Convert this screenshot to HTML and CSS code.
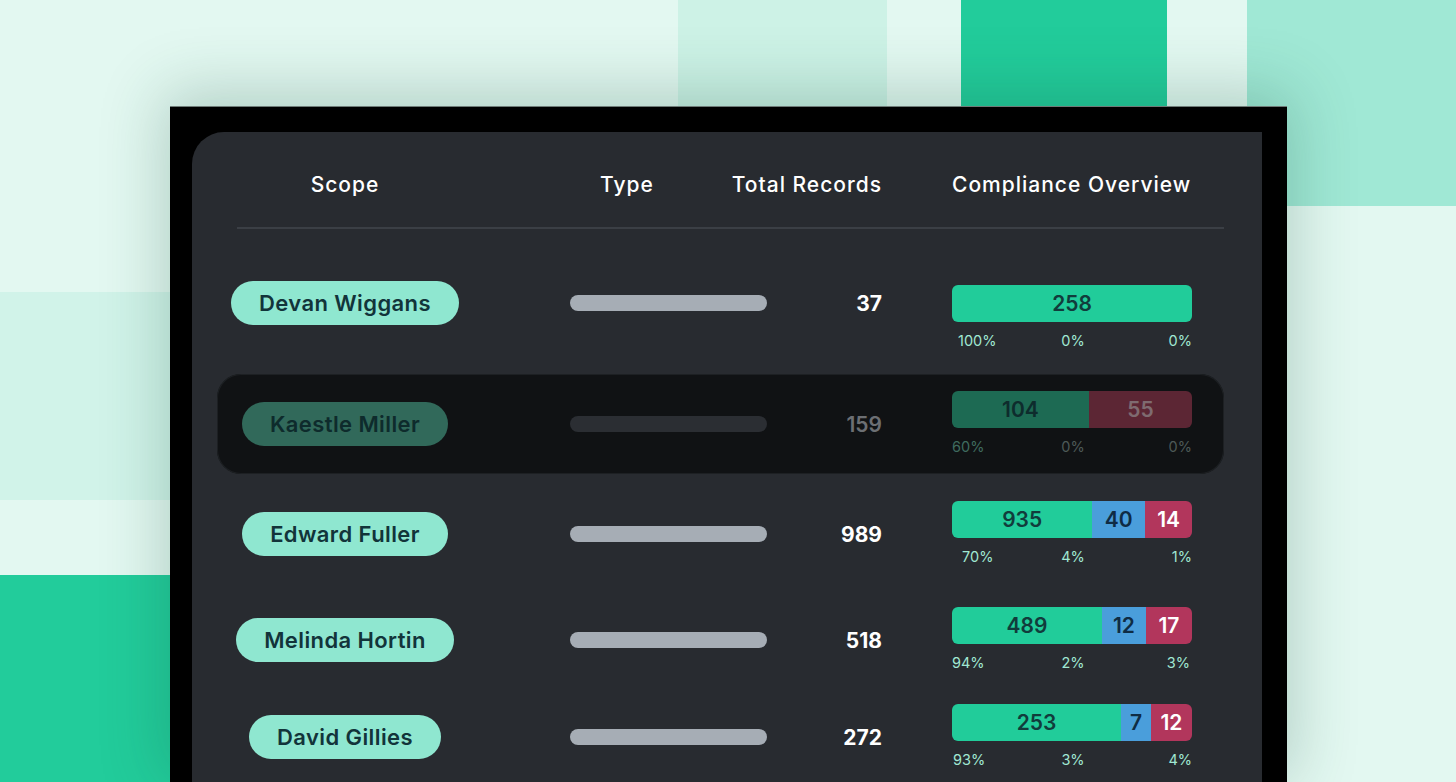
FILE: index.html
```html
<!DOCTYPE html>
<html lang="en">
    <head>
        <meta charset="utf-8">
        <title>Compliance Overview</title>
        <link rel="stylesheet" href="styles.css">
    </head>
    <body>
        <div class="frame">
            <div class="panel">
                <div class="table-head">
                    <div class="head-scope">Scope</div>
                    <div class="head-type">Type</div>
                    <div class="head-total"><span>Total Records</span></div>
                    <div class="head-compliance">Compliance Overview</div>
                </div>
                <div class="divider"></div>

                <div class="rows">
                    <div class="row row-first">
                        <div class="cell-scope"><span class="pill">Devan Wiggans</span></div>
                        <div class="cell-type"><div class="type-bar"></div></div>
                        <div class="cell-total">37</div>
                        <div class="cell-compliance">
                            <div class="stack">
                                <div class="seg seg-ok" style="width: 100%">258</div>
                            </div>
                            <div class="percents pad-6">
                                <span>100%</span><span>0%</span><span>0%</span>
                            </div>
                        </div>
                    </div>

                    <div class="row row-active">
                        <div class="cell-scope"><span class="pill">Kaestle Miller</span></div>
                        <div class="cell-type"><div class="type-bar"></div></div>
                        <div class="cell-total">159</div>
                        <div class="cell-compliance">
                            <div class="stack">
                                <div class="seg seg-ok" style="width: 57%">104</div>
                                <div class="seg seg-fail" style="width: 43%">55</div>
                            </div>
                            <div class="percents">
                                <span>60%</span><span>0%</span><span>0%</span>
                            </div>
                        </div>
                    </div>

                    <div class="row row-third">
                        <div class="cell-scope"><span class="pill">Edward Fuller</span></div>
                        <div class="cell-type"><div class="type-bar"></div></div>
                        <div class="cell-total">989</div>
                        <div class="cell-compliance">
                            <div class="stack">
                                <div class="seg seg-ok" style="width: 58.5%">935</div>
                                <div class="seg seg-warn" style="width: 22%">40</div>
                                <div class="seg seg-fail" style="width: 19.5%">14</div>
                            </div>
                            <div class="percents pad-10">
                                <span>70%</span><span>4%</span><span>1%</span>
                            </div>
                        </div>
                    </div>

                    <div class="row row-fourth">
                        <div class="cell-scope"><span class="pill">Melinda Hortin</span></div>
                        <div class="cell-type"><div class="type-bar"></div></div>
                        <div class="cell-total">518</div>
                        <div class="cell-compliance">
                            <div class="stack">
                                <div class="seg seg-ok" style="width: 62.5%">489</div>
                                <div class="seg seg-warn" style="width: 18.3%">12</div>
                                <div class="seg seg-fail" style="width: 19.2%">17</div>
                            </div>
                            <div class="percents end-2">
                                <span>94%</span><span>2%</span><span>3%</span>
                            </div>
                        </div>
                    </div>

                    <div class="row row-fifth">
                        <div class="cell-scope"><span class="pill">David Gillies</span></div>
                        <div class="cell-type"><div class="type-bar"></div></div>
                        <div class="cell-total">272</div>
                        <div class="cell-compliance">
                            <div class="stack">
                                <div class="seg seg-ok" style="width: 70.4%">253</div>
                                <div class="seg seg-warn" style="width: 12.5%">7</div>
                                <div class="seg seg-fail" style="width: 17.1%">12</div>
                            </div>
                            <div class="percents pad-1">
                                <span>93%</span><span>3%</span><span>4%</span>
                            </div>
                        </div>
                    </div>
                </div>
            </div>
        </div>
    </body>
</html>
```

FILE: styles.css
```css
* {
    box-sizing: border-box;
}

body {
    margin: 0;
    padding: 0;
    width: 1456px;
    height: 782px;
    overflow: hidden;
    font-family: "Inter", "Open Sans", sans-serif;
    background-color: #e3f8f1;
    /* mosaic tiles behind the frame */
    background-image:
        linear-gradient(#22cc9b, #22cc9b),
        linear-gradient(#a0e8d5, #a0e8d5),
        linear-gradient(#cdf2e6, #cdf2e6),
        linear-gradient(#d1f3e9, #d1f3e9),
        linear-gradient(#22cc9b, #22cc9b);
    background-repeat: no-repeat;
    background-size:
        206px 106px,
        209px 206px,
        209px 106px,
        170px 208px,
        170px 207px;
    background-position:
        961px 0,
        1247px 0,
        678px 0,
        0 292px,
        0 575px;
}

.frame {
    margin: 106px 0 0 170px;
    width: 1117px;
    height: 676px;
    background: #000;
    border-top: 1px solid #6f7c78;
    padding: 25px 0 0 22px;
    box-shadow: 0 -8px 60px 6px rgba(20, 80, 60, 0.24);
}

.panel {
    width: 1070px;
    height: 100%;
    background: #282b30;
    border-radius: 32px 0 0 0;
    padding: 0 38px 0 25px;
}

.table-head,
.row {
    display: grid;
    grid-template-columns: 256px 294px 115px 1fr;
    align-items: center;
}

.table-head {
    padding: 41px 0 30px;
    color: #fff;
    font-size: 21px;
    font-weight: 500;
    letter-spacing: 1px;
    line-height: 24px;
    white-space: nowrap;
}

.head-scope {
    text-align: center;
}

.head-type {
    padding-left: 127px;
}

.head-total {
    display: flex;
    justify-content: flex-end;
}

.head-compliance {
    padding-left: 70px;
}

.divider {
    height: 2px;
    margin-left: 20px;
    background: #3b3f45;
}

.rows {
    display: flex;
    flex-direction: column;
}

.row {
    height: 100px;
    border-radius: 24px;
}

.row-first {
    margin-top: 24px;
}

.row-active {
    margin-top: 21px;
    background: #101214;
    box-shadow: inset 0 0 0 1px #1d2023;
}

.row-third {
    margin-top: 10px;
}

.row-fourth {
    margin-top: 8px;
    height: 96px;
}

.row-fifth {
    margin-top: 4px;
    height: 90px;
}

.cell-scope {
    text-align: center;
}

.pill {
    display: inline-block;
    height: 44px;
    padding: 0 28px;
    border-radius: 22px;
    background: #8fe7d0;
    color: #12343a;
    font-size: 22px;
    font-weight: 600;
    letter-spacing: 0.4px;
    line-height: 44px;
    white-space: nowrap;
}

.cell-type {
    padding-left: 97px;
}

.type-bar {
    width: 197px;
    height: 16px;
    border-radius: 8px;
    background: #a6adb5;
}

.cell-total {
    text-align: right;
    color: #fff;
    font-size: 21px;
    font-weight: 700;
}

.cell-compliance {
    padding-left: 70px;
}

.row-first .cell-compliance {
    margin-top: 30px;
}

.stack {
    display: flex;
    width: 240px;
    height: 37px;
    border-radius: 6px;
    overflow: hidden;
}

.seg {
    display: flex;
    align-items: center;
    justify-content: center;
    font-size: 21px;
    font-weight: 600;
}

.seg-ok {
    background: #21cc9a;
    color: #113c3c;
}

.seg-warn {
    background: #4a9edb;
    color: #0f2c44;
}

.seg-fail {
    background: #b2365c;
    color: #fff;
}

.percents {
    display: grid;
    grid-template-columns: 96px 50px 1fr;
    width: 240px;
    margin-top: 9px;
    color: #a0e8d3;
    font-size: 14.5px;
    line-height: 20px;
}

.percents span:nth-child(2) {
    text-align: center;
}

.percents span:last-child {
    text-align: right;
}

.pad-1 span:first-child {
    padding-left: 1px;
}

.pad-6 span:first-child {
    padding-left: 6px;
}

.pad-10 span:first-child {
    padding-left: 10px;
}

.end-2 span:last-child {
    padding-right: 2px;
}

/* dimmed (selected) row */
.row-active .pill {
    background: #31695a;
    color: #0e2b2c;
}

.row-active .type-bar {
    background: #2b2e33;
}

.row-active .cell-total {
    color: #6c6f73;
    font-weight: 600;
}

.row-active .seg-ok {
    background: #1d6a53;
    color: #0e2c2d;
}

.row-active .seg-fail {
    background: #5c2634;
    color: #7f6b70;
}

.row-active .percents {
    color: #3f6b5f;
}

.row-active .percents span + span {
    color: #4d5957;
}
```
